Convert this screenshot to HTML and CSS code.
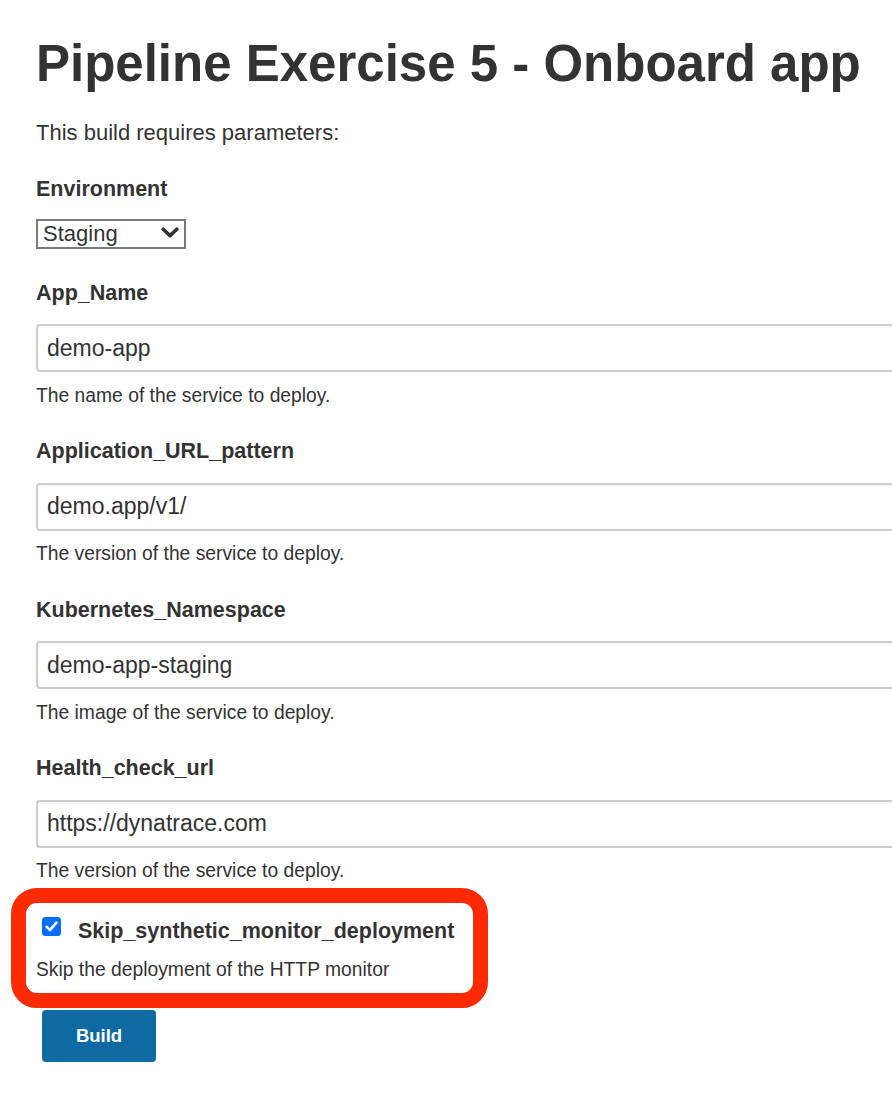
FILE: index.html
```html
<!DOCTYPE html>
<html lang="en">
<head>
<meta charset="utf-8">
<title>Pipeline Exercise 5 - Onboard app</title>
<link rel="stylesheet" href="styles.css">
</head>
<body>
<main class="page">
  <h1 class="title">Pipeline Exercise 5 - Onboard app</h1>
  <p class="intro">This build requires parameters:</p>
  <form class="params">
    <div class="param param-select">
      <label class="param-label">Environment</label>
      <div class="select">
        <span class="select-value">Staging</span>
        <svg class="chevron" width="18" height="11" viewBox="0 0 18 11" aria-hidden="true"><path d="M2.2 2.2 L9 8.6 L15.8 2.2" fill="none" stroke="#333" stroke-width="3.6" stroke-linecap="round" stroke-linejoin="round"/></svg>
      </div>
    </div>
    <div class="param">
      <label class="param-label">App_Name</label>
      <input class="text-input" type="text" value="demo-app">
      <p class="help">The name of the service to deploy.</p>
    </div>
    <div class="param">
      <label class="param-label">Application_URL_pattern</label>
      <input class="text-input" type="text" value="demo.app/v1/">
      <p class="help">The version of the service to deploy.</p>
    </div>
    <div class="param">
      <label class="param-label">Kubernetes_Namespace</label>
      <input class="text-input" type="text" value="demo-app-staging">
      <p class="help">The image of the service to deploy.</p>
    </div>
    <div class="param">
      <label class="param-label">Health_check_url</label>
      <input class="text-input" type="text" value="https://dynatrace.com">
      <p class="help">The version of the service to deploy.</p>
    </div>
    <div class="highlight">
      <div class="check-row">
        <span class="checkbox" role="checkbox" aria-checked="true">
          <svg width="19" height="19" viewBox="0 0 19 19" aria-hidden="true"><rect x="0" y="0" width="19" height="19" rx="3.5" fill="#0b6dfb"/><path d="M4.6 9.8 L8 13.1 L14.4 5.6" fill="none" stroke="#fff" stroke-width="2.6" stroke-linecap="round" stroke-linejoin="round"/></svg>
        </span>
        <span class="check-label">Skip_synthetic_monitor_deployment</span>
      </div>
      <p class="help check-help">Skip the deployment of the HTTP monitor</p>
    </div>
    <button class="build" type="button">Build</button>
  </form>
</main>
</body>
</html>
```

FILE: styles.css
```css
html, body {
  margin: 0;
  padding: 0;
  background: #fff;
  overflow-x: hidden;
}

body {
  font-family: "Liberation Sans", Arial, Helvetica, sans-serif;
  color: #333;
}

.page {
  padding: 34px 0 40px 36px;
}

.title {
  margin: 0;
  font-size: 51px;
  line-height: 60px;
  font-weight: bold;
  color: #333;
  white-space: nowrap;
}

.intro {
  margin: 24px 0 0;
  font-size: 22px;
  line-height: 30px;
}

.params {
  display: flex;
  flex-direction: column;
  align-items: flex-start;
  margin-top: 27px;
}

.param {
  display: flex;
  flex-direction: column;
  align-items: flex-start;
  margin-bottom: 29.5px;
}

.param-select {
  margin-bottom: 30px;
}

.param-label {
  font-size: 21.5px;
  line-height: 28px;
  font-weight: bold;
  color: #333;
}

.select {
  box-sizing: border-box;
  margin-top: 15.5px;
  width: 150px;
  height: 30px;
  border: 2px solid #7a7a7a;
  display: flex;
  align-items: center;
  justify-content: space-between;
  padding: 0 5px 0 5px;
}

.select-value {
  font-size: 22px;
  line-height: 26px;
  color: #333;
}

.chevron {
  display: block;
  margin-top: -2px;
}

.text-input {
  box-sizing: border-box;
  margin-top: 17.5px;
  width: 880px;
  height: 48px;
  border: 2px solid #cdcdcd;
  border-radius: 4px;
  box-shadow: inset 0 2px 2px rgba(0, 0, 0, 0.04);
  padding: 0 9px;
  font-family: "Liberation Sans", Arial, Helvetica, sans-serif;
  font-size: 23px;
  color: #333;
  background: #fff;
  outline: none;
}

.help {
  margin: 11.5px 0 0;
  font-size: 19.3px;
  line-height: 24px;
  color: #333;
}

.highlight {
  box-sizing: border-box;
  width: 477px;
  margin: -25px 0 0 -25px;
  border: 15px solid #fe2a02;
  border-radius: 26px;
  padding: 14px 10px 11.5px 10px;
  background: #fff;
}

.check-row {
  display: flex;
  align-items: flex-start;
  height: 28px;
}

.checkbox {
  display: block;
  width: 19px;
  height: 19px;
  margin: 0 17px 0 6px;
}

.checkbox svg {
  display: block;
}

.check-label {
  font-size: 21.5px;
  line-height: 28px;
  font-weight: bold;
  color: #333;
  white-space: nowrap;
}

.check-help {
  margin-top: 13px;
}

.build {
  margin: 2px 0 0 6px;
  width: 114px;
  height: 52px;
  border: none;
  border-radius: 4px;
  background: #0e6aa1;
  color: #fff;
  font-family: "Liberation Sans", Arial, Helvetica, sans-serif;
  font-size: 18.5px;
  font-weight: bold;
  padding: 0;
  cursor: pointer;
}
```
